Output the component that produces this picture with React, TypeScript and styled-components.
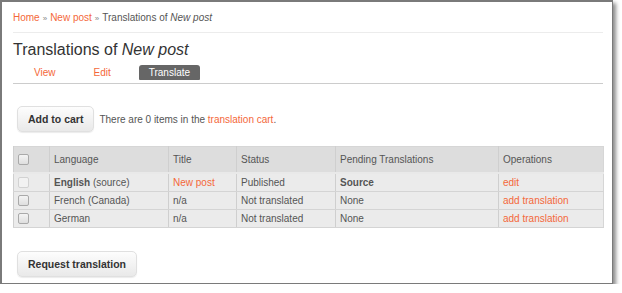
import React from 'react'
import styled, { createGlobalStyle } from 'styled-components'

const GlobalStyle = createGlobalStyle`
  html, body {
    margin: 0;
    padding: 0;
    background: #fff;
  }
  body {
    font-family: "Liberation Sans", Arial, sans-serif;
    font-size: 10px;
    color: #555;
  }
`

const Frame = styled.div`
  box-sizing: border-box;
  width: 613px;
  height: 284px;
  border: 1px solid #7a7a7a;
  border-left-width: 2px;
  border-top-width: 2px;
  box-shadow: 3px 3px 4px rgba(0, 0, 0, 0.45);
  padding: 8px 9px 0 11px;
  background: #fff;
`

const Link = styled.a`
  color: #f4683a;
  text-decoration: none;
`

const Breadcrumb = styled.div`
  line-height: 15px;
  color: #555;
  padding-bottom: 6px;
  border-bottom: 1px solid #ececec;

  .sep {
    font-size: 8px;
    color: #888;
    margin: 0 3px;
  }
`

const Title = styled.h1`
  margin: 7px 0 0;
  font-size: 16px;
  font-weight: normal;
  line-height: 20px;
  color: #333;
`

const Tabs = styled.div`
  display: flex;
  gap: 18px;
  margin-top: 5px;
  padding-left: 11px;
  padding-bottom: 3px;
  border-bottom: 1px solid #ccc;
`

const Tab = styled.a<{ $active?: boolean }>`
  padding: 0 10px;
  height: 15px;
  line-height: 15px;
  text-decoration: none;
  color: ${({ $active }) => ($active ? '#fff' : '#f4683a')};
  background: ${({ $active }) => ($active ? '#666' : 'transparent')};
  border-radius: 3px 3px 1px 1px;
`

const CartRow = styled.div`
  display: flex;
  align-items: center;
  gap: 5px;
  margin: 22px 0 0 4px;
`

const Button = styled.button`
  font-family: "Liberation Sans", Arial, sans-serif;
  font-size: 10.5px;
  font-weight: bold;
  color: #333;
  height: 26px;
  padding: 0 10px;
  border: 1px solid #e0e0e0;
  border-radius: 5px;
  background: linear-gradient(#fdfdfd, #e9e9e9);
  box-shadow: 0 1px 1px rgba(0, 0, 0, 0.08);
  cursor: pointer;
`

const Table = styled.table`
  margin-top: 14px;
  width: 591px;
  border-collapse: collapse;
  border: 1px solid #d6d6d6;

  th, td {
    text-align: left;
    padding: 0 4px;
    border-left: 1px solid #cfcfcf;
    color: #555;
    font-weight: normal;
  }

  th {
    background: #dddddd;
    height: 25px;
    border-bottom: 2px solid #e9e9e9;
  }

  td {
    background: #ebebeb;
    height: 17px;
    border-bottom: 1px solid #d4d4d4;
  }

  b {
    color: #555;
  }
`

const CheckCell = styled.td`
  width: 27px;
`

const Check = styled.span<{ $disabled?: boolean }>`
  display: inline-block;
  box-sizing: border-box;
  width: 11px;
  height: 11px;
  vertical-align: middle;
  border: 1px solid ${({ $disabled }) => ($disabled ? '#d2d2d2' : '#a9a9a9')};
  border-radius: 2px;
  background: ${({ $disabled }) => ($disabled ? '#f2f2f2' : 'linear-gradient(#f4f4f4, #dedede)')};
`

const Footer = styled.div`
  margin: 23px 0 0 4px;
`

type Row = {
  language: React.ReactNode
  title: React.ReactNode
  status: string
  pending: React.ReactNode
  op: string
  source?: boolean
}

const rows: Row[] = [
  {
    language: (
      <>
        <b>English</b> (source)
      </>
    ),
    title: <Link href="#">New post</Link>,
    status: 'Published',
    pending: <b>Source</b>,
    op: 'edit',
    source: true,
  },
  { language: 'French (Canada)', title: 'n/a', status: 'Not translated', pending: 'None', op: 'add translation' },
  { language: 'German', title: 'n/a', status: 'Not translated', pending: 'None', op: 'add translation' },
]

export default function App() {
  return (
    <>
      <GlobalStyle />
      <Frame>
        <Breadcrumb>
          <Link href="#">Home</Link>
          <span className="sep">»</span>
          <Link href="#">New post</Link>
          <span className="sep">»</span>
          Translations of <i>New post</i>
        </Breadcrumb>

        <Title>
          Translations of <i>New post</i>
        </Title>

        <Tabs>
          <Tab href="#">View</Tab>
          <Tab href="#">Edit</Tab>
          <Tab href="#" $active>
            Translate
          </Tab>
        </Tabs>

        <CartRow>
          <Button>Add to cart</Button>
          <span>
            There are 0 items in the <Link href="#">translation cart</Link>.
          </span>
        </CartRow>

        <Table>
          <thead>
            <tr>
              <th style={{ width: 27 }}>
                <Check />
              </th>
              <th style={{ width: 110 }}>Language</th>
              <th style={{ width: 59 }}>Title</th>
              <th style={{ width: 90 }}>Status</th>
              <th style={{ width: 154 }}>Pending Translations</th>
              <th>Operations</th>
            </tr>
          </thead>
          <tbody>
            {rows.map((r, i) => (
              <tr key={i}>
                <CheckCell>
                  <Check $disabled={r.source} />
                </CheckCell>
                <td>{r.language}</td>
                <td>{r.title}</td>
                <td>{r.status}</td>
                <td>{r.pending}</td>
                <td>
                  <Link href="#">{r.op}</Link>
                </td>
              </tr>
            ))}
          </tbody>
        </Table>

        <Footer>
          <Button>Request translation</Button>
        </Footer>
      </Frame>
    </>
  )
}
